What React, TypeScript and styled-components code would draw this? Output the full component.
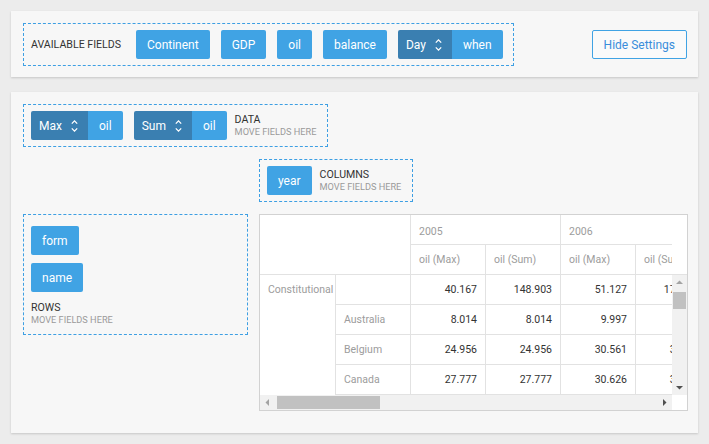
import React from 'react';
import styled, { createGlobalStyle } from 'styled-components';

const GlobalStyle = createGlobalStyle`
  html, body { margin: 0; padding: 0; background: #ececec; }
  body { font-family: Roboto, "Liberation Sans", Arial, sans-serif; }
  * { box-sizing: border-box; }
`;

const Page = styled.div`
  width: 709px;
  padding: 11px;
  display: flex;
  flex-direction: column;
  gap: 15px;
`;

const Panel = styled.section<{ $pad: string }>`
  background: #f7f7f7;
  box-shadow: 0 1px 2px rgba(0, 0, 0, 0.16);
  padding: ${(p) => p.$pad};
`;

const SettingsBar = styled.div`
  display: flex;
  align-items: center;
  justify-content: space-between;
`;

const DropZone = styled.div<{ $gap: number; $pad: string; $column?: boolean }>`
  border: 1px dashed #3d9fe3;
  padding: ${(p) => p.$pad};
  display: flex;
  flex-direction: ${(p) => (p.$column ? 'column' : 'row')};
  align-items: ${(p) => (p.$column ? 'flex-start' : 'center')};
  gap: ${(p) => p.$gap}px;
  align-self: start;
  justify-self: start;
`;

const FieldGroup = styled.div<{ $column?: boolean }>`
  display: flex;
  flex-direction: ${(p) => (p.$column ? 'column' : 'row')};
  align-items: flex-start;
  gap: ${(p) => (p.$column ? 8 : 11)}px;
`;

const ZoneCaption = styled.span`
  font-size: 10.6px;
  color: #333;
  text-transform: uppercase;
  margin-right: 4px;
`;

const FieldButton = styled.div`
  height: 29px;
  padding: 0 11px;
  display: inline-flex;
  align-items: center;
  background: #40a3e4;
  color: #fff;
  font-size: 12px;
  border-radius: 2px;
  white-space: nowrap;
`;

const SummaryField = styled.div`
  display: inline-flex;
  height: 29px;
  border-radius: 2px;
  overflow: hidden;
  font-size: 12px;
  color: #fff;
`;

const SummaryPart = styled.div`
  display: flex;
  align-items: center;
  gap: 9px;
  padding: 0 10px 0 8px;
  background: #3a7fb1;
`;

const SummaryName = styled.div`
  display: flex;
  align-items: center;
  padding: 0 11px;
  background: #40a3e4;
`;

const AreaLabel = styled.div<{ $top?: number }>`
  display: flex;
  flex-direction: column;
  margin-top: ${(p) => p.$top ?? 0}px;
`;

const AreaTitle = styled.span`
  font-size: 10.6px;
  line-height: 12px;
  color: #333;
`;

const AreaHint = styled.span`
  font-size: 9.2px;
  line-height: 11px;
  color: #9a9a9a;
`;

const HideButton = styled.button`
  height: 29px;
  padding: 0 11px;
  border: 1px solid #40a3e4;
  border-radius: 2px;
  background: #fafafa;
  color: #3a8ddb;
  font-family: inherit;
  font-size: 12px;
`;

const Layout = styled.div`
  display: grid;
  grid-template-columns: 225px 429px;
  column-gap: 11px;
  row-gap: 12px;
`;

const DataArea = styled.div`
  grid-column: 1 / -1;
  display: flex;
`;

const ColumnArea = styled.div`
  grid-column: 2;
  display: flex;
`;

const RowArea = styled.div`
  grid-column: 1;
  display: flex;
  flex-direction: column;
`;

/* ---------- pivot table ---------- */

const Pivot = styled.div`
  grid-column: 2;
  border: 1px solid #d2d2d2;
  background: #fff;
  display: flex;
  flex-direction: column;
  font-size: 10.5px;
  width: 429px;
`;

const HeaderRow = styled.div`
  display: flex;
  height: 60px;
  border-bottom: 1px solid #e2e2e2;
`;

const Corner = styled.div`
  width: 151px;
  border-right: 1px solid #e2e2e2;
  flex: none;
`;

const Viewport = styled.div<{ $w: number }>`
  width: ${(p) => p.$w}px;
  flex: none;
  overflow: hidden;
`;

const HeadGrid = styled.div`
  display: grid;
  grid-template-columns: repeat(6, 75px);
  grid-template-rows: 30px 29px;
  width: max-content;
`;

const HeadCell = styled.div<{ $span?: number; $last?: boolean }>`
  grid-column: span ${(p) => p.$span ?? 1};
  border-right: 1px solid #e2e2e2;
  border-bottom: ${(p) => (p.$last ? 'none' : '1px solid #e2e2e2')};
  padding: ${(p) => (p.$last ? '0 8px' : '3px 8px 0')};
  display: flex;
  align-items: center;
  color: #9c9c9c;
  white-space: nowrap;
`;

const BlankSide = styled.div`
  width: 15px;
  flex: none;
`;

const BodyRow = styled.div`
  display: flex;
  height: 120px;
`;

const BodyGrid = styled.div<{ $rows: number }>`
  display: grid;
  grid-template-columns: 76px 75px repeat(6, 75px);
  grid-template-rows: repeat(${(p) => p.$rows}, 30px);
  width: max-content;
`;

const GroupCell = styled.div<{ $rows: number }>`
  grid-row: span ${(p) => p.$rows};
  border-right: 1px solid #e2e2e2;
  padding: 0 0 0 8px;
  line-height: 29px;
  color: #9c9c9c;
  white-space: nowrap;
  overflow: hidden;
`;

const RowHeadCell = styled.div`
  border-right: 1px solid #e2e2e2;
  border-bottom: 1px solid #e2e2e2;
  padding: 0 8px;
  display: flex;
  align-items: center;
  color: #9c9c9c;
`;

const DataCell = styled.div`
  border-right: 1px solid #e2e2e2;
  border-bottom: 1px solid #e2e2e2;
  padding: 0 8px;
  display: flex;
  align-items: center;
  justify-content: flex-end;
  color: #333;
`;

const VScroll = styled.div`
  width: 15px;
  flex: none;
  background: #f1f1f1;
  display: flex;
  flex-direction: column;
  align-items: center;
`;

const VTrack = styled.div`
  flex: 1;
  width: 100%;
  padding: 2px 1px 0;
`;

const VThumb = styled.div`
  height: 17px;
  background: #c1c1c1;
`;

const HScrollRow = styled.div`
  display: flex;
  height: 15px;
`;

const HScroll = styled.div`
  width: 412px;
  background: #f1f1f1;
  display: flex;
  align-items: center;
`;

const HTrack = styled.div`
  flex: 1;
  height: 100%;
  padding: 1px 0 1px 2px;
  display: flex;
`;

const HThumb = styled.div`
  width: 103px;
  background: #c1c1c1;
`;

const ArrowBox = styled.svg`
  width: 15px;
  height: 15px;
  flex: none;
  display: block;
`;

type Dir = 'up' | 'down' | 'left' | 'right';
const arrowPts: Record<Dir, string> = {
  up: '4,9 11,9 7.5,5.5',
  down: '4,6 11,6 7.5,9.5',
  left: '9,4 9,11 5.5,7.5',
  right: '6,4 6,11 9.5,7.5',
};

const Arrow = ({ dir, off }: { dir: Dir; off?: boolean }) => (
  <ArrowBox viewBox="0 0 15 15">
    <polygon points={arrowPts[dir]} fill={off ? '#a3a3a3' : '#505050'} />
  </ArrowBox>
);

const SortIcon = () => (
  <svg width="7" height="14" viewBox="0 0 7 14" fill="none">
    <path d="M0.8 4.6 L3.5 1.9 L6.2 4.6" stroke="#fff" strokeWidth="1.3" />
    <path d="M0.8 9.4 L3.5 12.1 L6.2 9.4" stroke="#fff" strokeWidth="1.3" />
  </svg>
);

const Summary = ({ fn, name }: { fn: string; name: string }) => (
  <SummaryField>
    <SummaryPart>
      {fn}
      <SortIcon />
    </SummaryPart>
    <SummaryName>{name}</SummaryName>
  </SummaryField>
);

const years = ['2005', '2006', '2007'];

const rows: { label: string; values: string[] }[] = [
  { label: '', values: ['40.167', '148.903', '51.127', '178.524', '49.834', '171.209'] },
  { label: 'Australia', values: ['8.014', '8.014', '9.997', '9.997', '8.845', '8.845'] },
  { label: 'Belgium', values: ['24.956', '24.956', '30.561', '30.561', '29.471', '29.471'] },
  { label: 'Canada', values: ['27.777', '27.777', '30.626', '30.626', '31.217', '31.217'] },
  { label: 'Denmark', values: ['12.340', '12.340', '14.012', '14.012', '13.552', '13.552'] },
  { label: 'Japan', values: ['40.167', '40.167', '51.127', '51.127', '49.834', '49.834'] },
];

export default function App() {
  return (
    <>
      <GlobalStyle />
      <Page>
        <Panel $pad="12px 11px 11px 12px">
          <SettingsBar>
            <DropZone $gap={11} $pad="6px 10px 6px 7px">
              <ZoneCaption>Available Fields</ZoneCaption>
              <FieldButton>Continent</FieldButton>
              <FieldButton>GDP</FieldButton>
              <FieldButton>oil</FieldButton>
              <FieldButton>balance</FieldButton>
              <Summary fn="Day" name="when" />
            </DropZone>
            <HideButton>Hide Settings</HideButton>
          </SettingsBar>
        </Panel>

        <Panel $pad="12px 10px 22px 12px">
          <Layout>
            <DataArea>
              <DropZone $gap={8} $pad="6px 11px 6px 7px">
                <FieldGroup>
                  <Summary fn="Max" name="oil" />
                  <Summary fn="Sum" name="oil" />
                </FieldGroup>
                <AreaLabel>
                  <AreaTitle>DATA</AreaTitle>
                  <AreaHint>MOVE FIELDS HERE</AreaHint>
                </AreaLabel>
              </DropZone>
            </DataArea>

            <ColumnArea>
              <DropZone $gap={8} $pad="6px 11px 6px 7px">
                <FieldButton>year</FieldButton>
                <AreaLabel>
                  <AreaTitle>COLUMNS</AreaTitle>
                  <AreaHint>MOVE FIELDS HERE</AreaHint>
                </AreaLabel>
              </DropZone>
            </ColumnArea>

            <RowArea>
              <DropZone $gap={0} $pad="11px 7px 9px" $column style={{ width: 225 }}>
                <FieldGroup $column>
                  <FieldButton>form</FieldButton>
                  <FieldButton>name</FieldButton>
                </FieldGroup>
                <AreaLabel $top={10}>
                  <AreaTitle>ROWS</AreaTitle>
                  <AreaHint>MOVE FIELDS HERE</AreaHint>
                </AreaLabel>
              </DropZone>
            </RowArea>

            <Pivot>
              <HeaderRow>
                <Corner />
                <Viewport $w={261}>
                  <HeadGrid>
                    {years.map((y) => (
                      <HeadCell key={y} $span={2}>
                        {y}
                      </HeadCell>
                    ))}
                    {years.map((y) => (
                      <React.Fragment key={y}>
                        <HeadCell $last>oil (Max)</HeadCell>
                        <HeadCell $last>oil (Sum)</HeadCell>
                      </React.Fragment>
                    ))}
                  </HeadGrid>
                </Viewport>
                <BlankSide />
              </HeaderRow>

              <BodyRow>
                <Viewport $w={412}>
                  <BodyGrid $rows={rows.length}>
                    <GroupCell $rows={rows.length}>Constitutional</GroupCell>
                    {rows.map((r, i) => (
                      <React.Fragment key={i}>
                        <RowHeadCell>{r.label}</RowHeadCell>
                        {r.values.map((v, j) => (
                          <DataCell key={j}>{v}</DataCell>
                        ))}
                      </React.Fragment>
                    ))}
                  </BodyGrid>
                </Viewport>
                <VScroll>
                  <Arrow dir="up" off />
                  <VTrack>
                    <VThumb />
                  </VTrack>
                  <Arrow dir="down" />
                </VScroll>
              </BodyRow>

              <HScrollRow>
                <HScroll>
                  <Arrow dir="left" off />
                  <HTrack>
                    <HThumb />
                  </HTrack>
                  <Arrow dir="right" />
                </HScroll>
                <BlankSide />
              </HScrollRow>
            </Pivot>
          </Layout>
        </Panel>
      </Page>
    </>
  );
}
